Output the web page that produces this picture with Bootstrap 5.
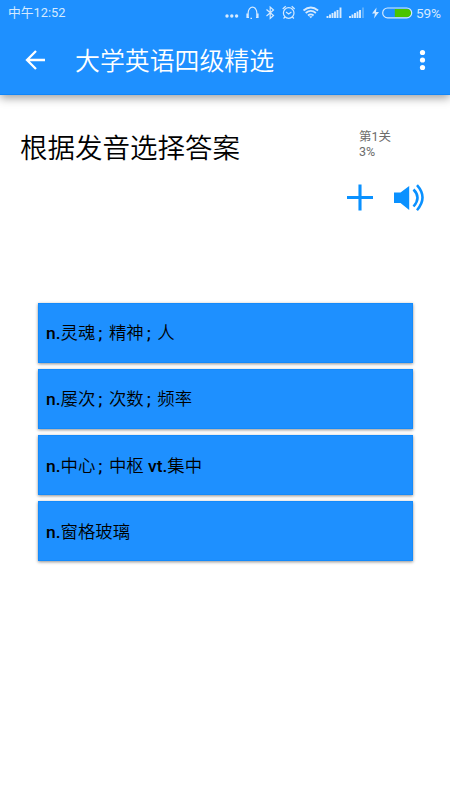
<!DOCTYPE html>
<html lang="zh-CN">
<head>
<meta charset="utf-8">
<meta name="viewport" content="width=device-width, initial-scale=1">
<title>大学英语四级精选</title>
<link href="https://cdn.jsdelivr.net/npm/bootstrap@5.3.0/dist/css/bootstrap.min.css" rel="stylesheet">
<style>
body{font-family:Roboto,"Noto Sans CJK SC",sans-serif;height:800px;overflow:hidden;color:#000}
svg{display:block;flex:none}
.top-bar{background:#1e90ff;height:95px;border-bottom:1px solid #0f86fa;box-shadow:0 3px 9px rgba(0,0,0,.38)}
.status{height:25px;padding:1px 8px 0;font-size:13px;line-height:24px;color:#d5eaff}
.status-time{font-size:12.800px}
.battery-text{margin-left:2px;font-size:13.600px;width:26px;letter-spacing:-.1px}
.app-row{height:70px;padding:0 20px 0 25px}
.app-title{font-size:24.9px;font-weight:350;line-height:36px;margin-left:30px;padding-top:3px}
.ask{padding:34px 20px 0 20px;height:88px}
.ask-title{font-size:27.5px;font-weight:350;line-height:40px}
.ask-info{font-size:12.5px;line-height:15px;color:#6c6c6c;width:71px}
.answers{margin:89.500px 37.500px 0;gap:6.3px}
.tools{padding:0 24px 0 347px;height:30px}
.answer{height:60px;background:#1e90ff;color:#000;border:1px solid #138afb;box-shadow:0 1px 3px rgba(0,0,0,.45);padding:1px 7.500px 0;font-size:17.4px;font-weight:500;line-height:24px}
.zh{font-weight:350}
.semi{display:inline-block;width:13.600px;padding-left:3px}
</style>
</head>
<body class="bg-white">
<header class="top-bar">
  <div class="status d-flex justify-content-between">
    <span class="status-time">中午12:52</span>
    <div class="d-flex">
      <svg width="190" height="24" viewBox="224 1 190 24" fill="none" stroke="#d5eaff">
        <g fill="#d5eaff" stroke="none"><circle cx="227" cy="16" r="1.7"/><circle cx="231.800" cy="16" r="1.7"/><circle cx="236.600" cy="16" r="1.7"/></g>
        <path d="M248.200 17v-4.500a4.300 5.300 0 0 1 8.600 0V17M247 13.500v4h2M258 13.500v4h-2M250.500 18.300h1.500" stroke-width="1.200"/>
        <path d="M266.500 9.500l7 6-3.300 3V7l3.300 3-7 6" stroke-width="1.200"/>
        <circle cx="288.700" cy="13" r="5.300" stroke-width="1.200"/><path d="M286 12l2.700 2 2.700-2M282.700 9l3-2.700M294.700 9l-3-2.700M285 17l-1.500 1.500M292.400 17l1.500 1.500" stroke-width="1.200"/>
        <path d="M303.500 10.500q7.300-6 14.600 0M305.700 13q5.100-4.200 10.200 0M308 15.500q2.800-2.200 5.600 0" stroke-width="1.800"/><path d="M309 16.200l1.800 2 1.800-2z" fill="#d5eaff" stroke="none"/>
        <path d="M327.500 18v-2M330 18v-3.500M332.500 18v-5M335 18v-6.500M337.500 18v-8M340.500 18V7.500" stroke-width="1.900"/>
        <path d="M350 18v-2M352.500 18v-3.500M355 18v-5M357.500 18v-6.500M360 18v-8" stroke-width="1.900"/><path d="M363 18V7.500" stroke="#66b3fb" stroke-width="1.700"/>
        <path d="M376.500 7.500l-4.500 6h3l-1 5 5-6.500h-3z" fill="#d5eaff" stroke="none"/>
        <path d="M394.800 9H407a3.800 3.800 0 0 1 0 8H394.800z" fill="#4ac400" stroke="none"/><rect x="382.700" y="8" width="29" height="9.800" rx="4.900" stroke-width="1.200"/>
      </svg>
      <span class="battery-text">59%</span>
    </div>
  </div>
  <div class="app-row d-flex align-items-center text-white">
    <svg width="20" height="20" viewBox="0 0 20 20" fill="none" stroke="#fff" stroke-width="2.300"><path d="M11 1L2 10l9 9M2 10h18"/></svg>
    <h1 class="app-title mb-0">大学英语四级精选</h1>
    <svg class="ms-auto" width="15" height="22" viewBox="0 0 15 22" fill="#fff"><circle cx="7.500" cy="3.500" r="2.600"/><circle cx="7.500" cy="11" r="2.600"/><circle cx="7.500" cy="18.500" r="2.600"/></svg>
  </div>
</header>
<main>
  <section class="ask d-flex justify-content-between">
    <h2 class="ask-title mb-0">根据发音选择答案</h2>
    <div class="ask-info">第1关<br>3%</div>
  </section>
  <div class="tools d-flex justify-content-between">
    <svg width="26" height="30" viewBox="0 0 26 30"><path d="M0 14.500h26M13 1.500v26" stroke="#0a91ff" stroke-width="3.100"/></svg>
    <svg width="32" height="30" viewBox="0 0 32 30"><path d="M0 9.500h6.500L15.200 3v24L6.500 20H0z" fill="#0a91ff"/><path d="M19.500 6.500Q27.500 14.500 19.500 23.500M23 2.200Q34 14.500 23 27.200" fill="none" stroke="#0a91ff" stroke-width="2.500"/></svg>
  </div>
  <div class="answers d-flex flex-column">
    <button class="answer btn rounded-0 text-start">n.<span class="zh">灵魂</span><span class="semi">;</span><span class="zh">精神</span><span class="semi">;</span><span class="zh">人</span></button>
    <button class="answer btn rounded-0 text-start">n.<span class="zh">屡次</span><span class="semi">;</span><span class="zh">次数</span><span class="semi">;</span><span class="zh">频率</span></button>
    <button class="answer btn rounded-0 text-start">n.<span class="zh">中心</span><span class="semi">;</span><span class="zh">中枢</span> vt.<span class="zh">集中</span></button>
    <button class="answer btn rounded-0 text-start">n.<span class="zh">窗格玻璃</span></button>
  </div>
</main>
<script src="https://cdn.jsdelivr.net/npm/bootstrap@5.3.0/dist/js/bootstrap.bundle.min.js"></script>
</body>
</html>
